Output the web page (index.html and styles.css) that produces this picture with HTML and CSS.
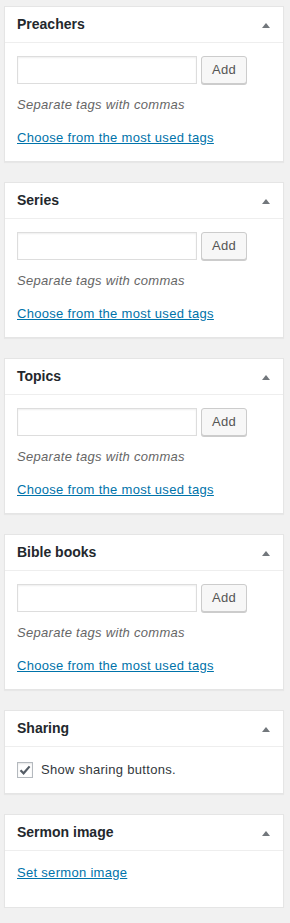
FILE: index.html
```html
<!DOCTYPE html>
<html>
<head>
<meta charset="utf-8">
<link rel="stylesheet" href="styles.css">
</head>
<body>
<div class="sidebar">
  <div class="postbox">
    <div class="hndle"><h2>Preachers</h2><span class="toggle"><svg width="8" height="5" viewBox="0 0 8 5"><polygon points="4,0 8,5 0,5" fill="#72777c"/></svg></span></div>
    <div class="inside tags">
      <div class="ajaxtag"><input class="newtag" type="text"><button class="button">Add</button></div>
      <p class="howto">Separate tags with commas</p>
      <p class="more"><a href="#">Choose from the most used tags</a></p>
    </div>
  </div>
  <div class="postbox">
    <div class="hndle"><h2>Series</h2><span class="toggle"><svg width="8" height="5" viewBox="0 0 8 5"><polygon points="4,0 8,5 0,5" fill="#72777c"/></svg></span></div>
    <div class="inside tags">
      <div class="ajaxtag"><input class="newtag" type="text"><button class="button">Add</button></div>
      <p class="howto">Separate tags with commas</p>
      <p class="more"><a href="#">Choose from the most used tags</a></p>
    </div>
  </div>
  <div class="postbox">
    <div class="hndle"><h2>Topics</h2><span class="toggle"><svg width="8" height="5" viewBox="0 0 8 5"><polygon points="4,0 8,5 0,5" fill="#72777c"/></svg></span></div>
    <div class="inside tags">
      <div class="ajaxtag"><input class="newtag" type="text"><button class="button">Add</button></div>
      <p class="howto">Separate tags with commas</p>
      <p class="more"><a href="#">Choose from the most used tags</a></p>
    </div>
  </div>
  <div class="postbox">
    <div class="hndle"><h2>Bible books</h2><span class="toggle"><svg width="8" height="5" viewBox="0 0 8 5"><polygon points="4,0 8,5 0,5" fill="#72777c"/></svg></span></div>
    <div class="inside tags">
      <div class="ajaxtag"><input class="newtag" type="text"><button class="button">Add</button></div>
      <p class="howto">Separate tags with commas</p>
      <p class="more"><a href="#">Choose from the most used tags</a></p>
    </div>
  </div>
  <div class="postbox">
    <div class="hndle"><h2>Sharing</h2><span class="toggle"><svg width="8" height="5" viewBox="0 0 8 5"><polygon points="4,0 8,5 0,5" fill="#72777c"/></svg></span></div>
    <div class="inside sharing">
      <label class="check"><span class="box"><svg width="14" height="14" viewBox="0 0 14 14"><path d="M2.5 7.2 L5.6 10.3 L11.6 3.4" fill="none" stroke="#555d66" stroke-width="2.2"/></svg></span>Show sharing buttons.</label>
    </div>
  </div>
  <div class="postbox">
    <div class="hndle"><h2>Sermon image</h2><span class="toggle"><svg width="8" height="5" viewBox="0 0 8 5"><polygon points="4,0 8,5 0,5" fill="#72777c"/></svg></span></div>
    <div class="inside image">
      <p class="more"><a href="#">Set sermon image</a></p>
    </div>
  </div>
</div>
</body>
</html>
```

FILE: styles.css
```css
html, body {
  margin: 0;
  padding: 0;
  background: #f1f1f1;
}
body {
  font-family: "Liberation Sans", Arial, sans-serif;
  font-size: 13px;
  line-height: 20px;
  color: #444;
}
.sidebar {
  padding: 6px 6px 0 4px;
  display: flex;
  flex-direction: column;
  gap: 20px;
}
.postbox {
  background: #fff;
  border: 1px solid #e5e5e5;
  box-shadow: 0 1px 1px rgba(0,0,0,.04);
}
.hndle {
  height: 35px;
  border-bottom: 1px solid #eee;
  display: flex;
  align-items: center;
  justify-content: space-between;
  padding: 0 13px 0 12px;
}
.hndle h2 {
  margin: 0;
  font-size: 14px;
  font-weight: 700;
  color: #23282d;
  line-height: 19.6px;
}
.toggle {
  display: flex;
  margin-top: 2px;
}
.inside {
  padding: 13px 12px 13px;
  letter-spacing: 0.3px;
}
.ajaxtag {
  display: flex;
  gap: 4px;
  height: 28px;
}
.newtag {
  width: 180px;
  height: 28px;
  box-sizing: border-box;
  margin: 0;
  border: 1px solid #ddd;
  box-shadow: inset 0 1px 2px rgba(0,0,0,.07);
  background: #fff;
  padding: 3px 5px;
}
.button {
  height: 28px;
  box-sizing: border-box;
  margin: 0;
  padding: 0 10px;
  border: 1px solid #ccc;
  border-radius: 3px;
  background: #f7f7f7;
  box-shadow: 0 1px 0 #ccc;
  color: #555;
  font-family: "Liberation Sans", Arial, sans-serif;
  font-size: 13px;
  line-height: 26px;
  letter-spacing: 0.3px;
}
.howto {
  margin: 11px 0 0;
  font-style: italic;
  color: #666;
}
.more {
  margin: 13px 0 0;
}
.more a {
  color: #0073aa;
  text-decoration: underline;
}
.sharing {
  padding: 13px 12px;
}
.check {
  display: flex;
  align-items: center;
  color: #32373c;
}
.box {
  width: 16px;
  height: 16px;
  box-sizing: border-box;
  border: 1px solid #b4b9be;
  background: #fff;
  box-shadow: inset 0 1px 2px rgba(0,0,0,.1);
  margin-right: 8px;
  display: flex;
  align-items: center;
  justify-content: center;
}
.image {
  padding: 12px 12px 24px;
}
.image .more {
  margin: 0;
}
```
